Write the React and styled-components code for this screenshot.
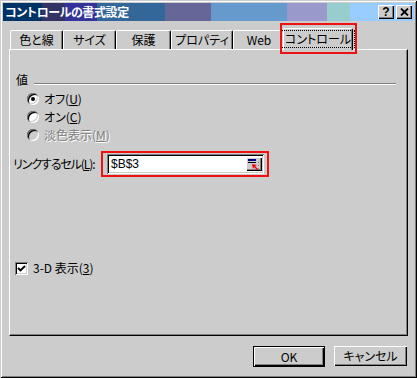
import React from "react";
import styled, { createGlobalStyle, css } from "styled-components";

const GlobalStyle = createGlobalStyle`
  html, body { margin: 0; padding: 0; background: #cccccc; }
  body {
    font-family: "Noto Sans CJK JP", "Noto Sans", sans-serif;
    font-size: 12px;
    font-feature-settings: "palt";
    color: #000;
  }
  * { box-sizing: border-box; }
`;

const raised = css`
  box-shadow: inset 1px 1px #ffffff, inset -1px -1px #000000, inset -2px -2px #808080;
`;
const sunken = css`
  box-shadow: inset 1px 1px #808080, inset -1px -1px #ffffff, inset 2px 2px #000000, inset -2px -2px #cccccc;
`;

const Window = styled.div`
  width: 417px;
  height: 378px;
  background: #cccccc;
  padding: 3px;
  display: flex;
  flex-direction: column;
  box-shadow: inset 1px 1px #cccccc, inset -1px -1px #000000, inset 2px 2px #ffffff, inset -2px -2px #808080;
`;

const TitleBar = styled.div`
  height: 18px;
  display: flex;
  align-items: center;
  padding: 0 2px;
  background: linear-gradient(
    to right,
    #003366 0 39px,
    #333366 39px 62px,
    #333399 62px 94px,
    #336699 94px 162px,
    #666699 162px 208px,
    #6699cc 208px 284px,
    #9999cc 284px 324px,
    #99cccc 324px 347px,
    #99ccff 347px
  );
`;

const TitleText = styled.div`
  flex: 1;
  color: #ffffff;
  font-weight: bold;
  font-size: 12px;
  line-height: 18px;
  letter-spacing: -0.4px;
`;

const TitleButtons = styled.div`
  display: flex;
  gap: 2px;
`;

const TitleButton = styled.div`
  width: 16px;
  height: 14px;
  background: #cccccc;
  ${raised};
  display: flex;
  align-items: center;
  justify-content: center;
  font-family: "Liberation Sans", Arial, sans-serif;
  font-weight: bold;
  font-size: 12px;
  line-height: 14px;
  padding-bottom: 1px;
`;

const Body = styled.div`
  flex: 1;
  display: flex;
  flex-direction: column;
  padding: 7px 6px 0 6px;
`;

const TabRow = styled.div`
  height: 21px;
  display: flex;
  align-items: flex-end;
  padding-left: 1px;
  position: relative;
  z-index: 1;
`;

const Tab = styled.div`
  width: ${(p) => p.$w}px;
  height: 19px;
  flex: none;
  display: flex;
  align-items: center;
  justify-content: center;
  background: #cccccc;
  border-top: 1px solid #ffffff;
  border-left: 1px solid #ffffff;
  border-right: 1px solid #000000;
  border-radius: 2px 2px 0 0;
  box-shadow: inset -1px 0 #808080;
  line-height: 14px;
  white-space: nowrap;
  ${(p) =>
    p.$active &&
    css`
      height: 22px;
      margin: 0 -2px -1px -2px;
      position: relative;
      z-index: 2;
      padding-bottom: 2px;
      &::after {
        content: "";
        position: absolute;
        left: -4px;
        right: -5px;
        top: -6px;
        bottom: -4px;
        border: 2px solid #ee1111;
        pointer-events: none;
      }
    `}
`;

const FocusLabel = styled.span`
  outline: 1px dotted #000;
  padding: 1px 3px;
  line-height: 14px;
`;

const Panel = styled.div`
  height: 287px;
  background: #cccccc;
  border-top: 1px solid #ffffff;
  border-left: 1px solid #ffffff;
  border-right: 1px solid #000000;
  border-bottom: 1px solid #000000;
  box-shadow: inset -1px -1px #808080;
  padding: 23px 0 0 3px;
  display: flex;
  flex-direction: column;
`;

const GroupHeader = styled.div`
  height: 14px;
  display: flex;
  align-items: center;
  margin-left: 3px;
  line-height: 14px;
`;

const GroupLine = styled.div`
  flex: 1;
  align-self: flex-start;
  margin: 10px 11px 0 6px;
  height: 2px;
  border-top: 1px solid #808080;
  border-bottom: 1px solid #ffffff;
`;

const RadioList = styled.div`
  display: flex;
  flex-direction: column;
  margin: 3px 0 0 14px;
`;

const OptionRow = styled.div`
  height: 18px;
  display: flex;
  align-items: center;
  gap: 5px;
  line-height: 14px;
  color: ${(p) => (p.$disabled ? "#808080" : "#000")};
  text-shadow: ${(p) => (p.$disabled ? "1px 1px #ffffff" : "none")};
`;

const RadioCircle = styled.span`
  width: 12px;
  height: 12px;
  border-radius: 50%;
  flex: none;
  background: ${(p) => (p.$disabled ? "#cccccc" : "#ffffff")};
  box-shadow: inset 1px 1px #808080, inset -1px -1px #ffffff, inset 2px 2px #000000, inset -2px -2px #cccccc;
  display: flex;
  align-items: center;
  justify-content: center;
  &::after {
    content: "";
    width: 4px;
    height: 4px;
    border-radius: 50%;
    background: ${(p) => (p.$checked ? "#000" : "transparent")};
  }
`;

const LinkRow = styled.div`
  height: 26px;
  margin-top: 7px;
  display: flex;
  align-items: center;
`;

const LinkLabel = styled.div`
  width: 94px;
  flex: none;
  line-height: 14px;
  white-space: nowrap;
  letter-spacing: -1.1px;
`;

const InputField = styled.div`
  position: relative;
  width: 157px;
  height: 20px;
  background: #ffffff;
  ${sunken};
  display: flex;
  align-items: center;
  padding: 0 2px 0 4px;
  font-family: "Liberation Sans", Arial, sans-serif;
  font-size: 12px;
  &::after {
    content: "";
    position: absolute;
    left: -6px;
    right: -5px;
    top: -3px;
    bottom: -3px;
    border: 2px solid #ee1111;
    pointer-events: none;
  }
`;

const InputValue = styled.span`
  flex: 1;
`;

const RefButton = styled.div`
  width: 16px;
  height: 14px;
  background: #cccccc;
  ${raised};
  display: flex;
  align-items: center;
  justify-content: center;
`;

const CheckRow = styled.div`
  height: 18px;
  margin: 82px 0 0 2px;
  display: flex;
  align-items: center;
  gap: 5px;
  line-height: 14px;
`;

const CheckBox = styled.span`
  width: 13px;
  height: 13px;
  flex: none;
  background: #ffffff;
  ${sunken};
  display: flex;
  align-items: center;
  justify-content: center;
`;

const ButtonRow = styled.div`
  height: 21px;
  margin-top: 10px;
  display: flex;
  justify-content: flex-end;
  gap: 9px;
  padding-right: 1px;
`;

const PushButton = styled.div`
  width: 72px;
  height: 21px;
  background: #cccccc;
  display: flex;
  align-items: center;
  justify-content: center;
  line-height: 14px;
  ${(p) =>
    p.$default
      ? css`
          border: 1px solid #000;
          ${raised};
        `
      : css`
          width: 73px;
          height: 20px;
          ${raised};
        `}
`;

const Mn = styled.span`
  text-decoration: underline;
  text-underline-offset: 1px;
`;

function CloseGlyph() {
  return (
    <svg width="9" height="8" viewBox="0 0 9 8">
      <path d="M1 0.5 L8 7.5 M8 0.5 L1 7.5" stroke="#000" strokeWidth="1.8" />
    </svg>
  );
}

function CheckGlyph() {
  return (
    <svg width="9" height="9" viewBox="0 0 9 9">
      <path d="M1 4 L3.5 6.5 L8 2" stroke="#000" strokeWidth="1.9" fill="none" />
    </svg>
  );
}

function RefGlyph() {
  return (
    <svg width="12" height="11" viewBox="0 0 12 11">
      <rect x="0" y="0" width="8" height="2" fill="#000080" />
      <rect x="0" y="3" width="8" height="1" fill="#000" />
      <rect x="10" y="3" width="1" height="1" fill="#808080" />
      <rect x="10" y="6" width="1" height="1" fill="#808080" />
      <rect x="10" y="9" width="1" height="1" fill="#808080" />
      <path d="M4 5 L9 6 L7 7 L10 10 L9 11 L6 8 L5 10 Z" fill="#ee0000" />
    </svg>
  );
}

const tabs = [
  { label: "色と線", w: 53 },
  { label: "サイズ", w: 53 },
  { label: "保護", w: 55 },
  { label: "プロパティ", w: 62 },
  { label: "Web", w: 52 },
];

export default function App() {
  return (
    <>
      <GlobalStyle />
      <Window>
        <TitleBar>
          <TitleText>コントロールの書式設定</TitleText>
          <TitleButtons>
            <TitleButton>?</TitleButton>
            <TitleButton>
              <CloseGlyph />
            </TitleButton>
          </TitleButtons>
        </TitleBar>
        <Body>
          <TabRow>
            {tabs.map((t) => (
              <Tab key={t.label} $w={t.w}>
                {t.label}
              </Tab>
            ))}
            <Tab $w={70} $active>
              <FocusLabel>コントロール</FocusLabel>
            </Tab>
          </TabRow>
          <Panel>
            <GroupHeader>
              値
              <GroupLine />
            </GroupHeader>
            <RadioList>
              <OptionRow>
                <RadioCircle $checked />
                <span>
                  オフ(<Mn>U</Mn>)
                </span>
              </OptionRow>
              <OptionRow>
                <RadioCircle />
                <span>
                  オン(<Mn>C</Mn>)
                </span>
              </OptionRow>
              <OptionRow $disabled>
                <RadioCircle $disabled />
                <span>
                  淡色表示(<Mn>M</Mn>)
                </span>
              </OptionRow>
            </RadioList>
            <LinkRow>
              <LinkLabel>
                リンクするセル(<Mn>L</Mn>):
              </LinkLabel>
              <InputField>
                <InputValue>$B$3</InputValue>
                <RefButton>
                  <RefGlyph />
                </RefButton>
              </InputField>
            </LinkRow>
            <CheckRow>
              <CheckBox>
                <CheckGlyph />
              </CheckBox>
              <span>
                3-D 表示(<Mn>3</Mn>)
              </span>
            </CheckRow>
          </Panel>
          <ButtonRow>
            <PushButton $default>OK</PushButton>
            <PushButton>キャンセル</PushButton>
          </ButtonRow>
        </Body>
      </Window>
    </>
  );
}
